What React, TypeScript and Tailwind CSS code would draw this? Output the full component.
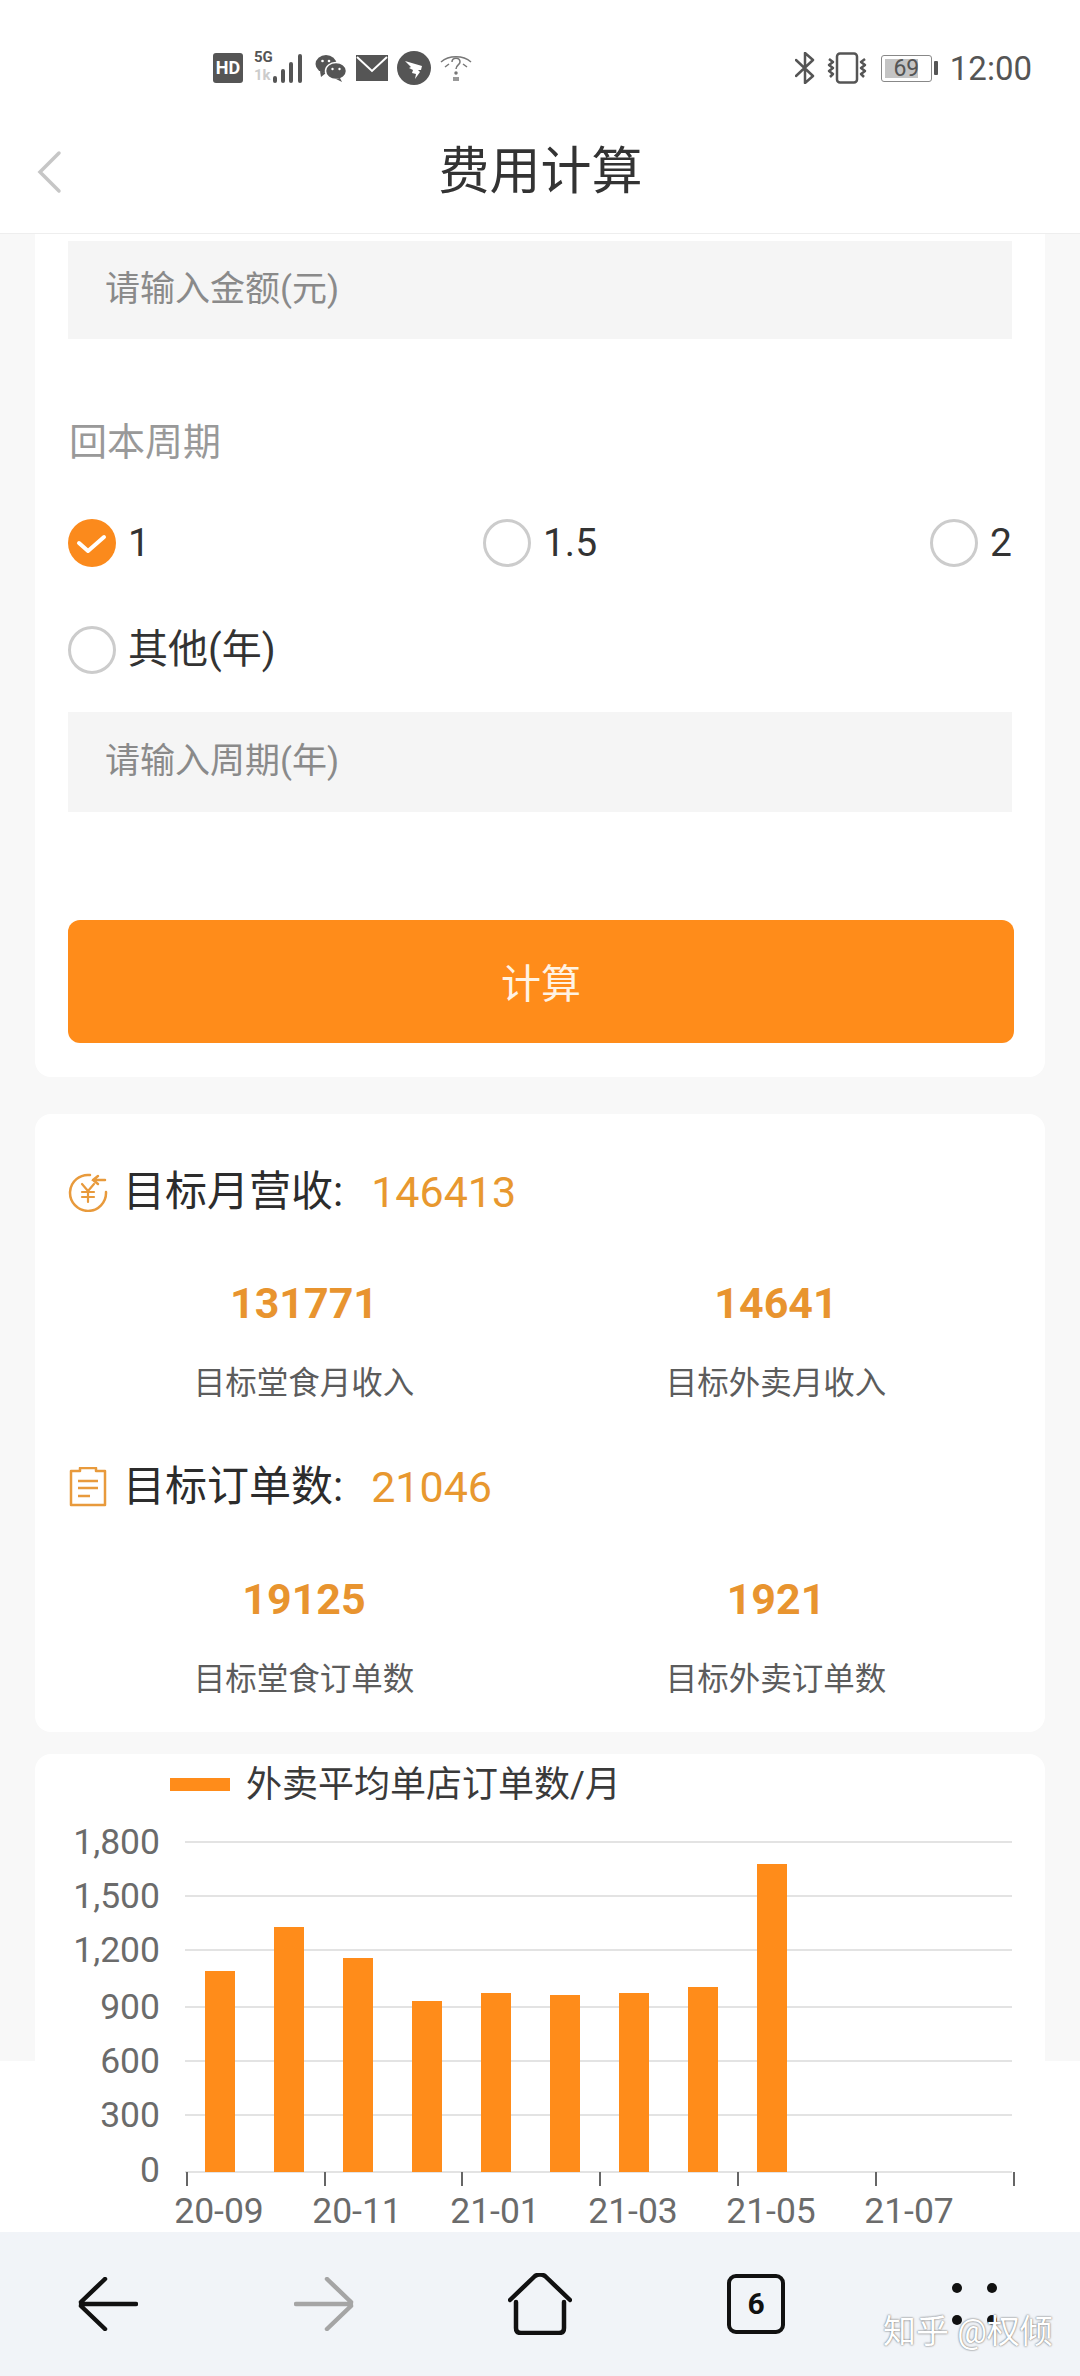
import { ReactNode } from "react";

const bars = [1972, 1928, 1959, 2002, 1994, 1996, 1994, 1988, 1865];
const yAxis = [
  { label: "1,800", y: 1843 },
  { label: "1,500", y: 1897 },
  { label: "1,200", y: 1951 },
  { label: "900", y: 2008 },
  { label: "600", y: 2062 },
  { label: "300", y: 2116 },
  { label: "0", y: 2171 },
];
const xLabels = ["20-09", "20-11", "21-01", "21-03", "21-05", "21-07"];

function StatusBar() {
  return (
    <div className="h-[100px] flex items-center justify-between pl-[213px] pr-[48px] pt-[36px] bg-white text-[#555]">
      <div className="flex items-center">
        <div className="w-[30px] h-[30px] rounded-[3px] bg-[#555] text-white text-[18px] font-bold leading-[30px] text-center">HD</div>
        <div className="relative w-[50px] h-[36px] ml-[11px]">
          <span className="absolute left-0 top-[-1px] text-[15px] font-bold leading-[16px]">5G</span>
          <span className="absolute left-0 top-[17px] text-[15px] font-bold leading-[16px] text-[#ccc]">1k</span>
          <svg className="absolute left-[19px] top-0" width="31" height="36" viewBox="0 0 31 36" fill="#555">
            <rect x="0" y="26" width="4" height="7" rx="2" />
            <rect x="8" y="19" width="4" height="14" rx="2" />
            <rect x="16" y="12" width="4" height="21" rx="2" />
            <rect x="25" y="4" width="4" height="29" rx="2" />
          </svg>
        </div>
        <svg className="ml-[11px]" width="32" height="30" viewBox="0 0 32 30" fill="#555">
          <ellipse cx="11" cy="11" rx="10.5" ry="9" />
          <path d="M5 18l1 6 5-4z" />
          <ellipse cx="21" cy="18" rx="10.5" ry="8.5" stroke="#fff" strokeWidth="1.5" />
          <path d="M25 25l2 4-6-3z" />
          <circle cx="7.5" cy="8" r="1.3" fill="#fff" />
          <circle cx="14" cy="8" r="1.3" fill="#fff" />
          <circle cx="17.5" cy="16" r="1.2" fill="#fff" />
          <circle cx="24.5" cy="16" r="1.2" fill="#fff" />
        </svg>
        <svg className="ml-[9px]" width="32" height="26" viewBox="0 0 32 26">
          <rect width="32" height="26" fill="#555" />
          <path d="M1 2l15 14L31 2" fill="none" stroke="#fff" strokeWidth="2" />
        </svg>
        <svg className="ml-[9px]" width="34" height="34" viewBox="0 0 34 34">
          <circle cx="17" cy="17" r="17" fill="#555" />
          <path d="M8 10l17 5-1 4-3 0 2 2-5 7 1-5-4-1 1-3-4-2 2-1z" fill="#fff" />
        </svg>
        <svg className="ml-[9px]" width="32" height="28" viewBox="0 0 32 28" fill="none" stroke="#777" strokeWidth="1.5">
          <path d="M1 8C9 1 23 1 31 8" />
          <path d="M5 13l4-3M27 13l-4-3" />
          <path d="M12 8c0-5 8-5 8 0 0 3-4 3-4 7" />
          <circle cx="16" cy="19" r="1" fill="#777" />
          <rect x="13" y="23" width="6" height="4" fill="#999" stroke="none" />
        </svg>
      </div>
      <div className="flex items-center">
        <svg width="20" height="32" viewBox="0 0 20 32" fill="none" stroke="#555" strokeWidth="2.5" strokeLinecap="round" strokeLinejoin="round">
          <path d="M1 8l17 16-8 7V1l8 7L1 24" />
        </svg>
        <svg className="ml-[11px]" width="42" height="32" viewBox="0 0 42 32" fill="none" stroke="#555" strokeLinejoin="round">
          <rect x="11" y="1.5" width="20" height="29" rx="3" strokeWidth="2.5" />
          <path d="M3 7l4 3-4 3 4 3-4 3 4 3-3 3M39 7l-4 3 4 3-4 3 4 3-4 3 3 3" strokeWidth="2.5" />
        </svg>
        <div className="ml-[13px] relative w-[51px] h-[27px] border border-[#888] rounded-[3px] overflow-hidden">
          <div className="absolute left-[3px] top-[3px] bottom-[3px] w-[33px] bg-[#c4c4c4]" />
          <span className="absolute inset-0 text-center text-[#555] text-[23px] leading-[26px]">69</span>
        </div>
        <div className="ml-[2px] w-[4px] h-[14px] rounded-[1px] bg-[#555]" />
        <span className="ml-[12px] text-[33px] leading-[42px] pt-[2px] text-[#555]">12:00</span>
      </div>
    </div>
  );
}

function Radio({ label, checked, textSize = "text-[39px]" }: { label: string; checked?: boolean; textSize?: string }) {
  return (
    <div className="flex items-center gap-[12px]">
      {checked ? (
        <svg width="48" height="48" viewBox="0 0 48 48">
          <circle cx="24" cy="24" r="24" fill="#fb8a1c" />
          <path d="M11 24l9 8 16-14" fill="none" stroke="#fff" strokeWidth="4" strokeLinecap="round" strokeLinejoin="round" />
        </svg>
      ) : (
        <div className="w-[48px] h-[48px] rounded-full border-[3px] border-[#cccccc] bg-white" />
      )}
      <span className={`${textSize} leading-[48px] text-[#333]`}>{label}</span>
    </div>
  );
}

function Card({ children, className }: { children: ReactNode; className: string }) {
  return <section className={`mx-[35px] bg-white rounded-[16px] ${className}`}>{children}</section>;
}

function Stat({ value, label }: { value: string; label: string }) {
  return (
    <div className="text-center">
      <div className="text-[43px] leading-[48px] font-bold text-[#e8942f]">{value}</div>
      <div className="mt-[37px] text-[31.5px] leading-[40px] text-[#5c5c5c]">{label}</div>
    </div>
  );
}

function Heading({ icon, title, value }: { icon: ReactNode; title: string; value: string }) {
  return (
    <div className="flex items-center h-[50px]">
      {icon}
      <span className="ml-[15px] text-[42px] leading-[50px] text-[#2c2c2c]">{title}:</span>
      <span className="ml-[28px] text-[43px] leading-[50px] text-[#e8982f]">{value}</span>
    </div>
  );
}

function Chart() {
  return (
    <svg className="block" width="1010" height="424" viewBox="35 1808 1010 424" fontFamily="Roboto, sans-serif">
      {yAxis.map((t) => (
        <g key={t.label}>
          <line x1="185" x2="1012" y1={t.y === 2171 ? 2173 : t.y} y2={t.y === 2171 ? 2173 : t.y} stroke="#e3e3e3" strokeWidth="2" />
          <text x="160" y={t.y + 12} textAnchor="end" fontSize="35.5" fill="#6b6b6b">{t.label}</text>
        </g>
      ))}
      {bars.map((top, i) => (
        <rect key={i} x={205 + i * 69} y={top} width="30" height={2173 - top} fill="#ff8c1a" />
      ))}
      {[187, 325, 462, 600, 738, 876, 1014].map((x) => (
        <line key={x} x1={x} x2={x} y1="2173" y2="2187" stroke="#666" strokeWidth="2" />
      ))}
      {xLabels.map((label, i) => (
        <text key={label} x={219 + i * 138} y="2224" textAnchor="middle" fontSize="35.5" fill="#6b6b6b">{label}</text>
      ))}
    </svg>
  );
}

function BottomNav() {
  return (
    <footer className="relative h-[144px] grid grid-cols-5 items-center justify-items-center bg-[#f1f4f8]">
      <svg width="60" height="54" viewBox="0 0 60 54" fill="none" stroke="#111" strokeWidth="4.5" strokeLinecap="round">
        <path d="M27 2L3 25M3 29l24 23M3 27h55" />
      </svg>
      <svg width="60" height="54" viewBox="0 0 60 54" fill="none" stroke="#a5a5a5" strokeWidth="4.5" strokeLinecap="round">
        <path d="M33 2l24 23M57 29L33 52M2 27h55" />
      </svg>
      <svg width="64" height="62" viewBox="0 0 64 62" fill="none" stroke="#111" strokeWidth="4.5" strokeLinecap="round" strokeLinejoin="round">
        <path d="M2 27L27 3q5-3 10 0l25 24" />
        <path d="M8 29v26q0 5 5 5h38q5 0 5-5V29" />
      </svg>
      <div className="w-[58px] h-[60px] rounded-[9px] border-[4px] border-[#111] text-center text-[30px] leading-[52px] font-bold text-[#111]">6</div>
      <div className="grid grid-cols-2 gap-x-[25px] gap-y-[22px] ml-[4px]">
        <div className="w-[10px] h-[10px] rounded-full bg-[#111]" />
        <div className="w-[10px] h-[10px] rounded-full bg-[#111]" />
        <div className="w-[10px] h-[10px] rounded-full bg-[#111]" />
        <div className="w-[10px] h-[10px] rounded-full bg-[#111]" />
      </div>
      <span className="absolute left-[883px] top-[80px] text-[33px] leading-[40px] text-white [text-shadow:0_0_2px_#444]">知乎 @权倾</span>
    </footer>
  );
}

export default function App() {
  return (
    <div className="w-[1080px] h-[2376px] flex flex-col overflow-hidden bg-white font-['Roboto','Noto_Sans_CJK_SC',sans-serif]">
      <StatusBar />
      <header className="h-[134px] shrink-0 flex items-center justify-center relative bg-white border-b border-[#eeeeee]">
        <svg className="absolute left-[36px] top-[50px]" width="26" height="44" viewBox="0 0 26 44" fill="none" stroke="#c6c6c6" strokeWidth="3.5" strokeLinecap="round">
          <path d="M23 3L4 22l19 19" />
        </svg>
        <h1 className="text-[51px] leading-[60px] text-[#333] pt-[10px] pl-[1px]">费用计算</h1>
      </header>

      <main className="flex-1 min-h-0 overflow-hidden flex flex-col bg-[linear-gradient(#f8f8f8_0,#f8f8f8_1827px,#ffffff_1827px)]">
        <Card className="shrink-0 h-[843px] rounded-t-none px-[33px] pt-[7px]">
          <div className="h-[98px] bg-[#f5f5f5] pl-[37px] text-[35px] leading-[98px] text-[#8a8a8a]">请输入金额(元)</div>
          <div className="mt-[78px] pl-[1px] text-[38px] leading-[50px] text-[#999]">回本周期</div>
          <div className="mt-[52px] flex justify-between">
            <Radio label="1" checked />
            <Radio label="1.5" />
            <Radio label="2" />
          </div>
          <div className="mt-[59px]">
            <Radio label="其他(年)" textSize="text-[40px]" />
          </div>
          <div className="mt-[38px] h-[100px] bg-[#f5f5f5] pl-[37px] text-[35px] leading-[100px] text-[#8a8a8a]">请输入周期(年)</div>
          <div className="mt-[108px] h-[123px] mr-[-2px] rounded-[12px] bg-[#ff8c1a] text-center text-[40px] leading-[129px] text-[#fff3e4]">计算</div>
        </Card>

        <Card className="shrink-0 mt-[37px] h-[618px] px-[33px] pt-[53px]">
          <Heading
            title="目标月营收"
            value="146413"
            icon={
              <svg width="40" height="40" viewBox="0 0 40 40" fill="none" stroke="#e89a3c" strokeWidth="2.5" strokeLinecap="round">
                <path d="M22 3A18 18 0 1 0 38 20" />
                <path d="M30 4l-5 4 5 4M25 8h12" />
                <path d="M14 12l6 7 6-7M20 19v11M14 20h12M14 25h12" strokeWidth="2.2" />
              </svg>
            }
          />
          <div className="mt-[62px] grid grid-cols-2">
            <Stat value="131771" label="目标堂食月收入" />
            <Stat value="14641" label="目标外卖月收入" />
          </div>
          <div className="mt-[58px]">
            <Heading
              title="目标订单数"
              value="21046"
              icon={
                <svg width="40" height="40" viewBox="0 0 40 40" fill="none" stroke="#e89a3c" strokeWidth="2.5" strokeLinejoin="round">
                  <path d="M12 4H3v34h34V4h-9V1H12z" />
                  <path d="M10 14h20M10 21h20M10 29h12" />
                </svg>
              }
            />
          </div>
          <div className="mt-[63px] grid grid-cols-2">
            <Stat value="19125" label="目标堂食订单数" />
            <Stat value="1921" label="目标外卖订单数" />
          </div>
        </Card>

        <Card className="shrink-0 mt-[22px] h-[477px] rounded-b-none">
          <div className="h-[53px] flex items-center pl-[135px] pt-[8px]">
            <div className="w-[60px] h-[13px] bg-[#ff8c1a]" />
            <span className="ml-[16px] text-[36px] leading-[44px] text-[#3a3a3a]">外卖平均单店订单数/月</span>
          </div>
          <Chart />
        </Card>
      </main>

      <BottomNav />
    </div>
  );
}
